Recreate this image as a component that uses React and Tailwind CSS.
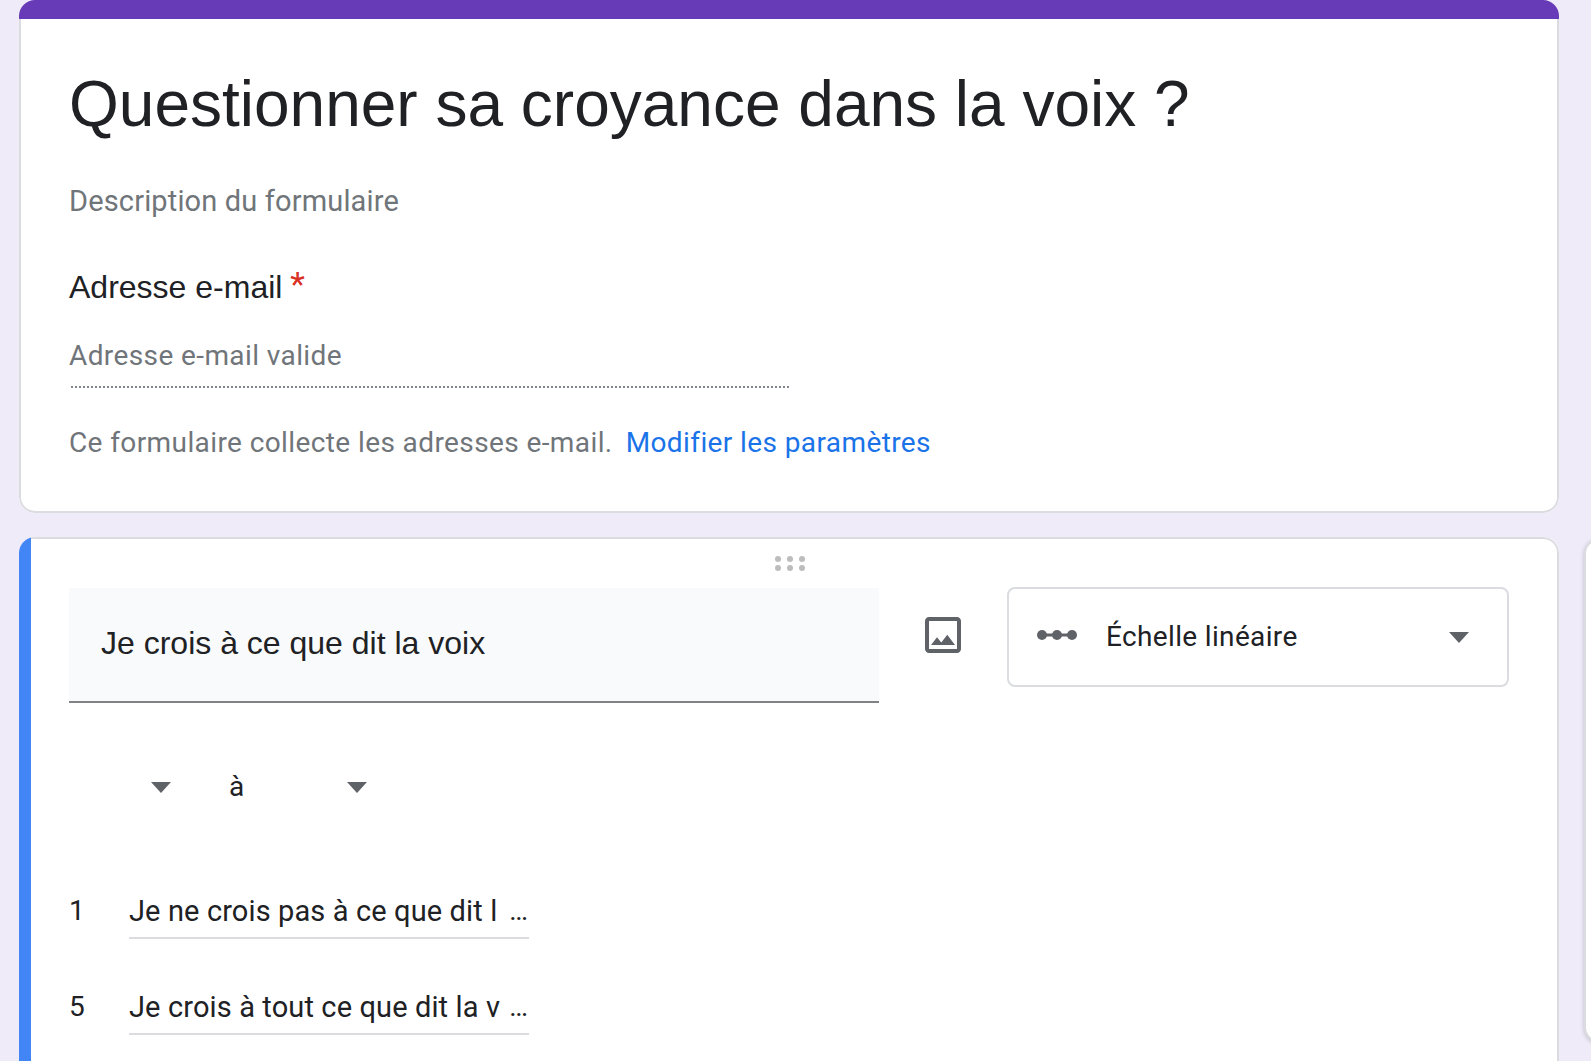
const arial = "font-['Liberation_Sans',Arial,sans-serif]";
const roboto = "font-['Roboto',sans-serif]";

function Triangle({ className = "" }) {
  return (
    <svg width="20" height="11" viewBox="0 0 20 11" className={className}>
      <path d="M0 0h20L10 11z" fill="#5f6368" />
    </svg>
  );
}

function ScaleRow({ n, text }) {
  return (
    <div className={`flex h-12 ${roboto} text-[28px] text-[#202124]`}>
      <div className="w-[60px] leading-10">{n}</div>
      <div className="w-[400px] flex justify-between border-b-2 border-[#dadce0] leading-10 whitespace-nowrap pr-[2px] text-[29px] tracking-[0.12px]">
        <span>{text}</span>
        <span className="text-[28px] tracking-[-1.5px]">...</span>
      </div>
    </div>
  );
}

export default function App() {
  return (
    <div className="h-[1061px] w-[1591px] overflow-hidden bg-[#f0ebf8] flex pl-[19px] items-start">
      <div className="w-[1540px] shrink-0 flex flex-col">
        {/* Title card */}
        <div className="h-[513px] bg-white rounded-[16px] overflow-hidden flex flex-col">
          <div className="h-[19px] bg-[#673ab7] shrink-0" />
          <div className="flex-1 border-x-2 border-b-2 border-[#dadce0] rounded-b-[16px] pl-[48px] pt-[45px]">
            <div className={`${arial} text-[64px] leading-[80px] text-[#202124]`}>
              Questionner sa croyance dans la voix ?
            </div>
            <div className={`${roboto} mt-[37px] text-[29px] leading-10 tracking-[0.15px] text-[#70757a]`}>
              Description du formulaire
            </div>
            <div className={`${arial} mt-[46px] text-[32px] leading-10 text-[#202124]`}>
              Adresse e-mail <span className={`${roboto} -ml-[1px] text-[#d93025] text-[34px] leading-[0] align-[2px]`}>*</span>
            </div>
            <div className={`${roboto} mt-[29px] text-[28px] leading-10 tracking-[0.4px] text-[#70757a]`}>
              Adresse e-mail valide
            </div>
            <div className="mt-[10px] ml-[2px] w-[718px] border-b-2 border-dotted border-[#80868b]" />
            <div className={`${roboto} mt-[35px] text-[28px] leading-10 tracking-[0.4px] text-[#70757a] whitespace-nowrap`}>
              Ce formulaire collecte les adresses e-mail.
              <span className="ml-[13px] text-[#1a73e8]">Modifier les paramètres</span>
            </div>
          </div>
        </div>

        {/* Question card */}
        <div className="mt-[24px] h-[600px] bg-white rounded-[16px] overflow-hidden flex">
          <div className="w-[12px] bg-[#4285f4] shrink-0" />
          <div className="flex-1 border-t-2 border-r-2 border-[#dadce0] rounded-tr-[16px]">
            <div className="pt-[17px] pr-[9px] flex justify-center">
              <div className="grid grid-cols-3 gap-x-[6px] gap-y-[3px] w-[30px]">
                {[0, 1, 2, 3, 4, 5].map((i) => (
                  <div key={i} className="size-[6px] rounded-full bg-[#bdbdbd]" />
                ))}
              </div>
            </div>
            <div className="mt-[16px] pl-[38px] flex items-start">
              <div className={`mt-[1px] w-[810px] h-[115px] bg-[#f9fafb] border-b-2 border-[#808285] pl-[32px] pt-[35px] ${arial} text-[32px] leading-10 text-[#202124]`}>
                Je crois à ce que dit la voix
              </div>
              <svg width="48" height="48" viewBox="0 0 24 24" fill="#5f6368" className="ml-[40px] mt-[24px] shrink-0">
                <path d="M19 5v14H5V5h14m0-2H5c-1.1 0-2 .9-2 2v14c0 1.1.9 2 2 2h14c1.1 0 2-.9 2-2V5c0-1.1-.9-2-2-2zM14.14 11.86l-3 3.87L9 13.14 6 17h12l-3.86-5.14z" />
              </svg>
              <div className={`ml-[40px] w-[502px] h-[100px] border-2 border-[#dadce0] rounded-[8px] flex items-center pl-[28px] pr-[38px] ${roboto} text-[28px] text-[#202124]`}>
                <svg width="40" height="12" viewBox="0 0 40 12" className="shrink-0 mb-[4px]">
                  <rect x="4" y="4.5" width="32" height="3" fill="#5f6368" />
                  <circle cx="5" cy="6" r="5" fill="#5f6368" />
                  <circle cx="20" cy="6" r="5" fill="#5f6368" />
                  <circle cx="35" cy="6" r="5" fill="#5f6368" />
                </svg>
                <span className="ml-[29px] tracking-[0.35px] flex-1">Échelle linéaire</span>
                <Triangle />
              </div>
            </div>
            <div className={`mt-[64px] pl-[120px] h-10 flex items-center ${roboto} text-[28px] text-[#202124]`}>
              <Triangle />
              <span className="ml-[58px] w-[14px]">à</span>
              <Triangle className="ml-[104px]" />
            </div>
            <div className="mt-[84px] pl-[38px]">
              <ScaleRow n="1" text="Je ne crois pas à ce que dit l" />
              <div className="mt-[48px]">
                <ScaleRow n="5" text="Je crois à tout ce que dit la v" />
              </div>
            </div>
          </div>
        </div>
      </div>
      <div className="mt-[538px] ml-[25px] w-[100px] h-[505px] shrink-0 bg-white rounded-[16px] border-2 border-[#dadce0] shadow-[0_1px_4px_rgba(0,0,0,0.2)]" />
    </div>
  );
}
